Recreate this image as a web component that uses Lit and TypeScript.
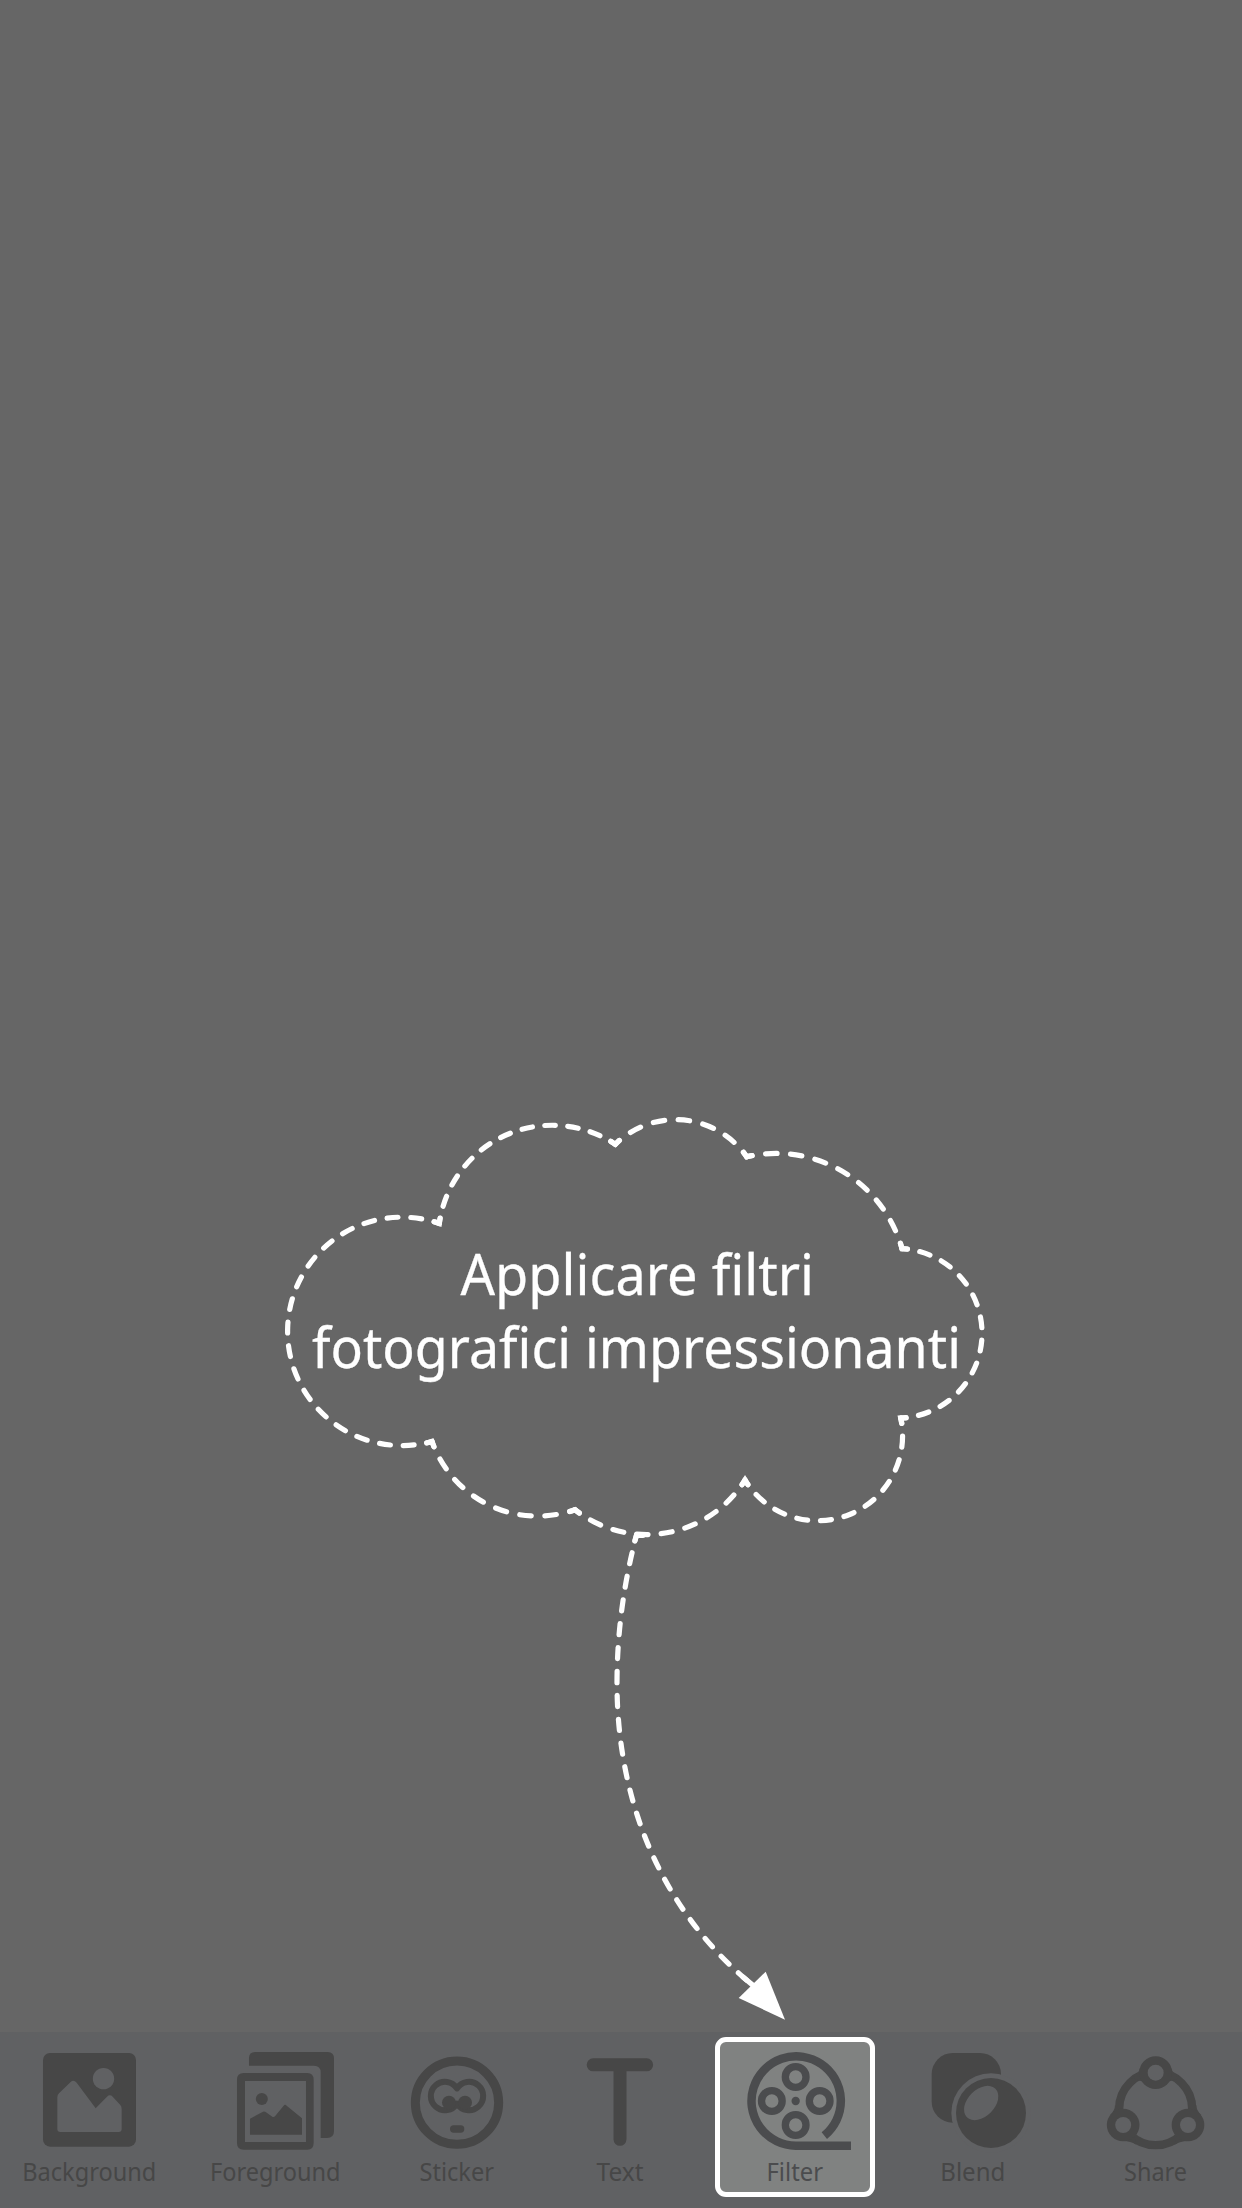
import { LitElement, html, svg, css, SVGTemplateResult } from "lit";
import { customElement, property } from "lit/decorators.js";

interface Lobe {
  x: number;
  y: number;
  r: number;
  dashes: number;
  large?: boolean;
}

// Each lobe starts at (x, y) and runs clockwise to the start of the next one.
const LOBES: Lobe[] = [
  { x: 432, y: 1441.5, r: 114.2, dashes: 18, large: true },
  { x: 439.3, y: 1223.5, r: 114, dashes: 10 },
  { x: 615.3, y: 1144.3, r: 86.4, dashes: 6 },
  { x: 746.7, y: 1156.8, r: 130.5, dashes: 8 },
  { x: 902, y: 1248.7, r: 84.75, dashes: 11 },
  { x: 900.7, y: 1418, r: 85, dashes: 10 },
  { x: 745, y: 1480, r: 115.8, dashes: 8 },
  { x: 575, y: 1509.7, r: 112, dashes: 7 },
];

function tangents(a: Lobe, b: Lobe) {
  const dx = b.x - a.x;
  const dy = b.y - a.y;
  let half = Math.asin(Math.min(1, Math.hypot(dx, dy) / 2 / a.r));
  if (a.large) half = Math.PI - half;
  const chord = Math.atan2(dy, dx);
  return { start: chord - half, end: chord + half };
}

@customElement("tip-callout")
export class TipCallout extends LitElement {
  static styles = css`
    :host {
      display: block;
    }
    svg {
      display: block;
    }
    .line {
      fill: none;
      stroke: #fff;
      stroke-width: 5.2;
      stroke-linecap: round;
      stroke-linejoin: miter;
      stroke-miterlimit: 10;
    }
    .head {
      fill: #fff;
    }
    .message {
      fill: #fff;
      stroke: #fff;
      stroke-width: 0.3;
      font-family: "Noto Sans", "Open Sans", sans-serif;
      font-size: 57.4px;
    }
  `;

  render() {
    const n = LOBES.length;
    return html`
      <svg width="1242" height="2032" viewBox="0 0 1242 2032">
        ${LOBES.map((a, i) => {
          const b = LOBES[(i + 1) % n];
          return svg`<path class="line" pathLength=${a.dashes * 100}
            stroke-dasharray="46 54" stroke-dashoffset="23"
            d="M${a.x} ${a.y}A${a.r} ${a.r} 0 ${a.large ? 1 : 0} 1 ${b.x} ${b.y}" />`;
        })}
        ${LOBES.map((a, i) => {
          const prev = LOBES[(i + n - 1) % n];
          const t0 = tangents(prev, a).end;
          const t1 = tangents(a, LOBES[(i + 1) % n]).start;
          const d = 5.5;
          return svg`<path class="line"
            d="M${a.x - d * Math.cos(t0)} ${a.y - d * Math.sin(t0)}L${a.x} ${a.y}L${a.x + d * Math.cos(t1)} ${a.y + d * Math.sin(t1)}" />`;
        })}
        <path class="line" d="M643 1535.3H636.5L634.8 1541" />
        <path
          class="line"
          stroke-dasharray="11.2 12.75"
          stroke-dashoffset="5.6"
          d="M636.5 1535C624 1582 617 1632 617 1683.300C617 1799 660 1911 755 1987"
        />
        <path class="line" d="M743 1977L755 1987" />
        <path class="head" d="M765.7 1971.7L738.7 1998L785 2019.7Z" />
        <text class="message" x="460.5" y="1295.3" textLength="353.5" lengthAdjust="spacingAndGlyphs">Applicare filtri</text>
        <text class="message" x="312" y="1368.3" textLength="649" lengthAdjust="spacingAndGlyphs">fotografici impressionanti</text>
      </svg>
    `;
  }
}

interface Tool {
  label: string;
  left: number;
  width: number;
  textX: number;
  textWidth: number;
  originX: number;
  icon: SVGTemplateResult;
}

// Icons are drawn on a 3x grid whose origin is (originX, -22) in the bar.
const TOOLS: Tool[] = [
  {
    label: "Background", left: 0, width: 182, textX: 22.3, textWidth: 134, originX: 0,
    icon: svg`
      <rect x="129" y="129" width="279" height="281" rx="21" />
      <circle class="cut" cx="310.5" cy="206" r="32" />
      <path class="cut" d="M172 262Q172 255 177 250L212 216Q221 208 230 218L287 295L321 260Q330 252 338 260L361 285Q365 290 365 297V357Q365 366 356 366H181Q172 366 172 357Z" />`,
  },
  {
    label: "Foreground", left: 182, width: 184, textX: 210, textWidth: 130.5, originX: 0,
    icon: svg`
      <path d="M747 167V144Q747 126 765 126H983Q1002 126 1002 146V363Q1002 384 981 384H962V187Q962 167 942 167Z" />
      <path fill-rule="evenodd" d="M731 189H922Q941 189 941 209V399Q941 419 922 419H731Q711 419 711 399V209Q711 189 731 189ZM735 213V396H918V213Z" />
      <circle cx="785.500" cy="267" r="18" />
      <path d="M750 326L789 305Q793 303 797 306L817 320Q821 323 825 319L851 287Q855 282 860 287L906 325V374H750Z" />`,
  },
  {
    label: "Sticker", left: 366, width: 174, textX: 419.5, textWidth: 74.5, originX: 360,
    icon: svg`
      <circle class="stroke" cx="291" cy="278" r="125" stroke-width="27" />
      <path class="stroke" stroke-width="18" stroke-linejoin="round" d="M291 235.400A42.500 42.500 0 1 0 291 280.600A42.500 42.500 0 1 0 291 235.400Z" />
      <circle cx="267" cy="278" r="21" />
      <circle cx="315" cy="278" r="21" />
      <rect x="270" y="346" width="43" height="22" rx="11" />`,
  },
  {
    label: "Text", left: 540, width: 175, textX: 596.5, textWidth: 47, originX: 360,
    icon: svg`<path class="stroke" stroke-width="39" stroke-linecap="round" d="M699.500 164.500H860M780 164.500V388" />`,
  },
  {
    label: "Filter", left: 715, width: 160, textX: 766.5, textWidth: 56.5, originX: 690,
    icon: svg`
      <path class="stroke" stroke-width="25.500" d="M403 377A134 134 0 1 0 317 407H483" />
      <circle cx="317" cy="273" r="12.500" />
      <circle class="stroke" stroke-width="22" cx="317" cy="201" r="31" />
      <circle class="stroke" stroke-width="22" cx="245.500" cy="273" r="31" />
      <circle class="stroke" stroke-width="22" cx="389" cy="273" r="31" />
      <circle class="stroke" stroke-width="22" cx="317" cy="345" r="31" />`,
  },
  {
    label: "Blend", left: 875, width: 190, textX: 940.3, textWidth: 65, originX: 890,
    icon: svg`
      <rect x="125" y="129" width="208" height="209" rx="63" />
      <circle class="cut" cx="303" cy="309" r="119" />
      <circle cx="303" cy="309" r="105" />
      <ellipse class="cut" cx="273.500" cy="279" rx="60.500" ry="40.500" transform="rotate(-45 273.500 279)" />`,
  },
  {
    label: "Share", left: 1065, width: 177, textX: 1124, textWidth: 63, originX: 890,
    icon: svg`
      <circle class="stroke" stroke-width="25" cx="797" cy="296" r="109.500" />
      <path d="M749 174Q749 189 724 204L762 216ZM845 174Q845 189 870 204L832 216ZM675 285Q675 302 660 315L700 312ZM919 285Q919 302 934 315L894 312ZM694 393Q718 391 739 404L732 368ZM899 393Q875 391 854 404L861 368Z" />
      <circle cx="797" cy="188" r="49" />
      <circle cx="699.500" cy="345" r="49" />
      <circle cx="894" cy="345" r="49" />
      <circle class="cut" cx="797" cy="188" r="24" />
      <circle class="cut" cx="699.500" cy="345" r="24" />
      <circle class="cut" cx="894" cy="345" r="24" />`,
  },
];

@customElement("tool-item")
export class ToolItem extends LitElement {
  @property({ attribute: false }) tool!: Tool;
  @property({ type: Boolean, reflect: true }) selected = false;

  static styles = css`
    :host {
      display: block;
      height: 176px;
      color: #474747;
      --cut: #606163;
    }
    :host([selected]) {
      box-sizing: border-box;
      height: 160px;
      margin-top: 5px;
      border: 5px solid #fff;
      border-radius: 11px;
      background: #808281;
      color: #4b4c4e;
      --cut: #808281;
    }
    svg {
      display: block;
      fill: currentColor;
    }
    :host([selected]) svg {
      margin: -10px 0 0 -5px;
    }
    .stroke {
      fill: none;
      stroke: currentColor;
    }
    .cut {
      fill: var(--cut);
    }
    .label {
      font-family: "Noto Sans", "Open Sans", sans-serif;
      font-size: 25px;
    }
  `;

  render() {
    const t = this.tool;
    return html`
      <svg width=${t.width} height="165" viewBox="${t.left} 0 ${t.width} 165">
        <g transform="translate(${t.originX} -22) scale(0.33333)">${t.icon}</g>
        <text class="label" x=${t.textX} y="148.800" textLength=${t.textWidth} lengthAdjust="spacingAndGlyphs">${t.label}</text>
      </svg>
    `;
  }
}

@customElement("app-root")
export class AppRoot extends LitElement {
  static styles = css`
    :host {
      display: flex;
      flex-direction: column;
      width: 1242px;
      height: 2208px;
      overflow: hidden;
      background: #666;
    }
    .bar {
      display: grid;
      grid-template-columns: 182px 184px 174px 175px 160px 190px 177px;
      align-items: start;
      height: 176px;
      background: #606163;
    }
  `;

  render() {
    return html`
      <tip-callout></tip-callout>
      <nav class="bar">
        ${TOOLS.map(
          (t) => html`<tool-item .tool=${t} ?selected=${t.label === "Filter"}></tool-item>`
        )}
      </nav>
    `;
  }
}
